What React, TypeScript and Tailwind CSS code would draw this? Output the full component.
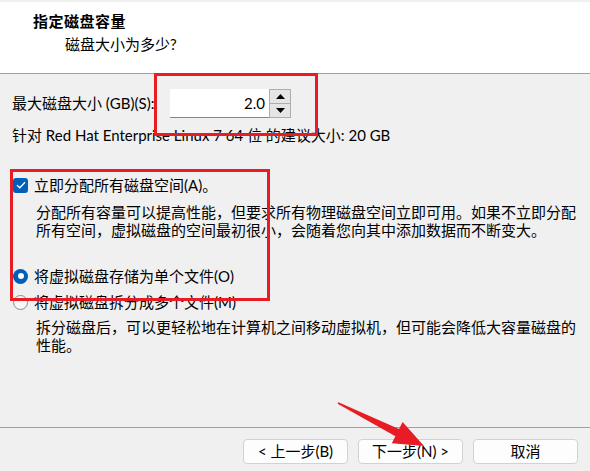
const font = { fontFamily: 'Lato, "Noto Sans CJK SC", sans-serif' };

function Radio({ checked }: { checked?: boolean }) {
  return checked ? (
    <span className="w-[15px] h-[15px] rounded-full bg-[#005fb8] flex items-center justify-center shrink-0">
      <span className="w-[6px] h-[6px] rounded-full bg-white"></span>
    </span>
  ) : (
    <span className="w-[15px] h-[15px] rounded-full border border-[#8a8a8a] bg-[#f7f7f7] shrink-0"></span>
  );
}

function Button({ label }: { label: string }) {
  return (
    <button className="w-[105px] h-[25px] rounded-[4px] border border-[#d2d2d2] bg-[#fdfdfd] text-[15px] text-black leading-none">
      {label}
    </button>
  );
}

export default function App() {
  return (
    <div
      className="relative w-[590px] h-[471px] bg-[#f0f0f0] overflow-hidden flex flex-col text-[15px] text-black"
      style={font}
    >
      {/* header */}
      <div className="mt-[2px] h-[72px] bg-white border-b border-[#a0a0a0] pt-[9px]">
        <div className="pl-[33px] leading-[20px] font-bold tracking-[0.5px]">指定磁盘容量</div>
        <div className="pl-[65px] mt-[3px] leading-[20px]">磁盘大小为多少?</div>
      </div>

      {/* body */}
      <div className="flex-1 pl-[12px]">
        <div className="mt-[15px] flex items-center h-[29px]">
          <span className="w-[158px] whitespace-nowrap">最大磁盘大小 (GB)(S):</span>
          <div className="w-[99px] h-[29px] bg-white border-b border-[#868686] flex items-center justify-end pr-[4px]">
            2.0
          </div>
          <div className="w-[22px] h-[29px] border border-[#adadad] bg-[#e5e5e5] flex flex-col">
            <div className="flex-1 flex items-center justify-center border-b border-[#adadad]">
              <svg width="9" height="5" viewBox="0 0 9 5">
                <path d="M0 5 L4.5 0 L9 5 Z" fill="#000" />
              </svg>
            </div>
            <div className="flex-1 flex items-center justify-center">
              <svg width="9" height="5" viewBox="0 0 9 5">
                <path d="M0 0 L4.5 5 L9 0 Z" fill="#000" />
              </svg>
            </div>
          </div>
        </div>

        <div className="mt-[7px] leading-[20px]">
          针对 Red Hat Enterprise Linux 7 64 位 的建议大小: 20 GB
        </div>

        <div className="mt-[30px] flex items-center gap-[6px] h-[20px] pl-[1px]">
          <span className="w-[15px] h-[15px] rounded-[3px] bg-[#005fb8] flex items-center justify-center">
            <svg width="10" height="8" viewBox="0 0 10 8">
              <path d="M1 4.2 L3.8 6.8 L9 1.2" stroke="#fff" strokeWidth="1.3" fill="none" />
            </svg>
          </span>
          <span>立即分配所有磁盘空间(A)。</span>
        </div>
        <div className="mt-[8px] pl-[24px] leading-[18px] w-[580px]">
          <div>分配所有容量可以提高性能，但要求所有物理磁盘空间立即可用。如果不立即分配</div>
          <div>所有空间，虚拟磁盘的空间最初很小，会随着您向其中添加数据而不断变大。</div>
        </div>

        <div className="mt-[27px] flex items-center gap-[6px] h-[20px] pl-[1px]">
          <Radio checked />
          <span>将虚拟磁盘存储为单个文件(O)</span>
        </div>
        <div className="mt-[6px] flex items-center gap-[6px] h-[20px] pl-[1px]">
          <Radio />
          <span>将虚拟磁盘拆分成多个文件(M)</span>
        </div>
        <div className="mt-[6px] pl-[24px] leading-[18px] w-[580px]">
          <div>拆分磁盘后，可以更轻松地在计算机之间移动虚拟机，但可能会降低大容量磁盘的</div>
          <div>性能。</div>
        </div>
      </div>

      {/* footer */}
      <div className="border-t border-[#a0a0a0] pt-[11px] pb-[7px] pr-[12px] flex justify-end gap-[10px]">
        <Button label="< 上一步(B)" />
        <Button label="下一步(N) >" />
        <Button label="取消" />
      </div>

      {/* annotations */}
      <div className="absolute left-[154px] top-[73px] w-[164px] h-[63px] border-[3px] border-[#e81c24]"></div>
      <div className="absolute left-[10px] top-[169px] w-[260px] h-[132px] border-[3px] border-[#e81c24]"></div>
      <svg className="absolute left-0 top-0 pointer-events-none" width="590" height="471">
        <polygon
          points="337.6,403.8 395.4,436.2 391.8,443.3 424,446 402.6,421.9 399,429 338.4,402.2"
          fill="#e81c24"
        />
      </svg>
    </div>
  );
}
